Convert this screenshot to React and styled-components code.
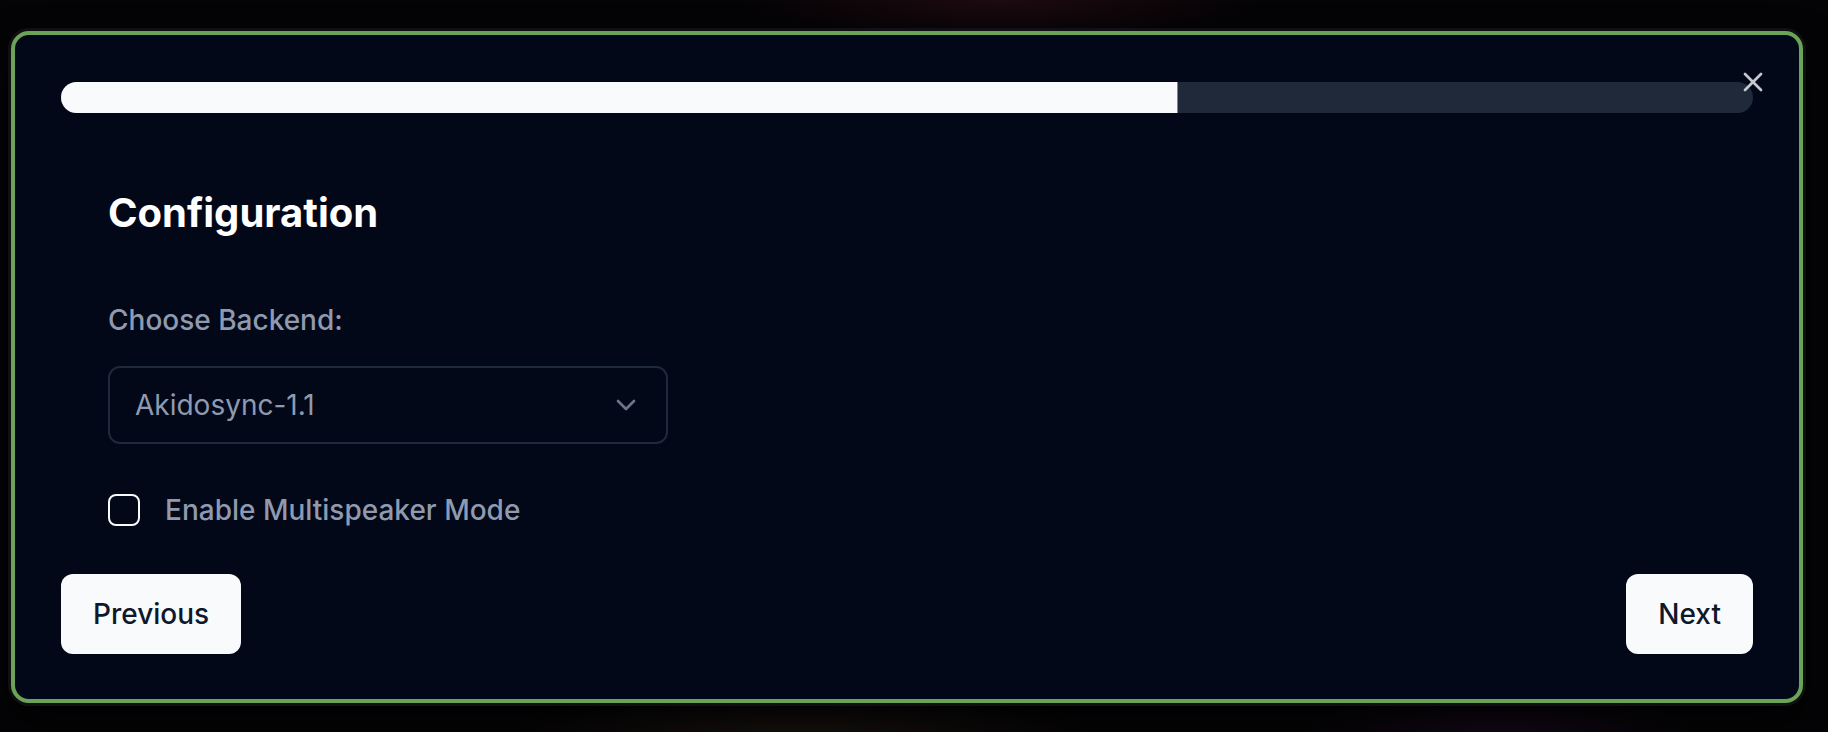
import React, { useState } from 'react'
import styled, { createGlobalStyle } from 'styled-components'
import { X, ChevronDown } from 'lucide-react'

const GlobalStyle = createGlobalStyle`
  html, body {
    margin: 0;
    padding: 0;
    background: #040305;
    font-family: Inter, "Noto Sans", sans-serif;
  }
  * { box-sizing: border-box; }
`

const Backdrop = styled.div`
  width: 1828px;
  height: 732px;
  padding: 31px 25px 29px 11px;
  display: flex;
  background:
    radial-gradient(ellipse 260px 40px at 1000px 0px, rgba(60, 20, 30, 0.45), transparent),
    radial-gradient(ellipse 300px 40px at 800px 732px, rgba(60, 45, 30, 0.35), transparent),
    radial-gradient(ellipse 200px 40px at 1500px 732px, rgba(50, 20, 60, 0.35), transparent),
    #040305;
`

const Dialog = styled.div`
  position: relative;
  flex: 1;
  display: flex;
  flex-direction: column;
  border: 4px solid #6ba358;
  border-radius: 18px;
  background: #020817;
  padding: 47px 46px 45px 46px;
  box-shadow: 0 0 0 3px rgba(20, 20, 24, 0.8), 0 20px 40px rgba(0, 0, 0, 0.6);
`

const CloseButton = styled.button`
  position: absolute;
  top: 31px;
  right: 30px;
  width: 32px;
  height: 32px;
  padding: 0;
  border: none;
  background: none;
  color: #c3c8d1;
  display: flex;
  align-items: center;
  justify-content: center;
  cursor: pointer;
`

const Track = styled.div`
  height: 32px;
  border-radius: 999px;
  background: #1f293a;
  overflow: hidden;
  display: flex;
`

const Fill = styled.div`
  height: 100%;
  background: #f8fafc;
  border-right: 1px solid #7c8594;
`

const Body = styled.div`
  flex: 1;
  display: flex;
  flex-direction: column;
  padding: 77px 0 0 47px;
`

const Title = styled.h2`
  margin: 0;
  font-size: 40px;
  line-height: 46px;
  font-weight: 700;
  color: #ffffff;
`

const Label = styled.label`
  margin-top: 68px;
  font-size: 28px;
  line-height: 32px;
  font-weight: 500;
  color: #8f9ab0;
`

const Select = styled.div`
  margin-top: 30px;
  width: 560px;
  height: 78px;
  border: 2px solid #1e293b;
  border-radius: 12px;
  display: flex;
  align-items: center;
  justify-content: space-between;
  padding: 0 24px 0 25px;
  font-size: 28px;
  color: #8f9ab0;
  svg { color: #6b7587; }
`

const CheckRow = styled.div`
  margin-top: 50px;
  display: flex;
  align-items: center;
  gap: 25px;
  height: 32px;
`

const Box = styled.div`
  width: 32px;
  height: 32px;
  border: 2px solid #f8fafc;
  border-radius: 8px;
  background: ${p => (p.checked ? '#f8fafc' : 'transparent')};
  cursor: pointer;
`

const CheckLabel = styled.span`
  font-size: 28px;
  line-height: 32px;
  font-weight: 500;
  color: #8f9ab0;
`

const Footer = styled.div`
  display: flex;
  justify-content: space-between;
  margin-top: 48px;
`

const Button = styled.button`
  height: 80px;
  padding: 0 32px;
  border: none;
  border-radius: 12px;
  background: #f8fafc;
  color: #0f172a;
  font-family: inherit;
  font-size: 28px;
  font-weight: 500;
  cursor: pointer;
`

export default function App() {
  const [multi, setMulti] = useState(false)
  const progress = 66

  return (
    <>
      <GlobalStyle />
      <Backdrop>
        <Dialog>
          <CloseButton aria-label="Close">
            <X size={32} strokeWidth={2} />
          </CloseButton>
          <Track>
            <Fill style={{ width: `${progress}%` }} />
          </Track>
          <Body>
            <Title>Configuration</Title>
            <Label>Choose Backend:</Label>
            <Select>
              <span>Akidosync-1.1</span>
              <ChevronDown size={32} strokeWidth={2} />
            </Select>
            <CheckRow>
              <Box checked={multi} onClick={() => setMulti(!multi)} />
              <CheckLabel>Enable Multispeaker Mode</CheckLabel>
            </CheckRow>
          </Body>
          <Footer>
            <Button>Previous</Button>
            <Button>Next</Button>
          </Footer>
        </Dialog>
      </Backdrop>
    </>
  )
}
